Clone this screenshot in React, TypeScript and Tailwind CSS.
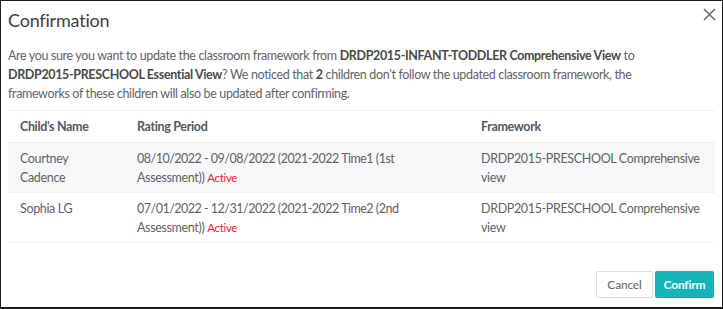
import React from "react";

const font = { fontFamily: "Lato, 'Liberation Sans', sans-serif" };

export default function App() {
  const rows = [
    {
      name: ["Courtney", "Cadence"],
      period: ["08/10/2022 - 09/08/2022 (2021-2022 Time1 (1st", "Assessment))"],
      fw: ["DRDP2015-PRESCHOOL Comprehensive", "view"],
      bg: "bg-[#f7f8fa]",
    },
    {
      name: ["Sophia LG"],
      period: ["07/01/2022 - 12/31/2022 (2021-2022 Time2 (2nd", "Assessment))"],
      fw: ["DRDP2015-PRESCHOOL Comprehensive", "view"],
      bg: "bg-white",
    },
  ];
  return (
    <div
      className="w-[723px] h-[309px] border border-b-2 border-[#1c1c1c] bg-white flex flex-col text-[#5f6368]"
      style={font}
    >
      <div className="flex justify-between items-start pl-[7px] pr-[5px] pt-[5px]">
        <div className="text-[18px] leading-[28px] tracking-[-0.2px] text-[#3f3f3f]">Confirmation</div>
        <button className="mt-[1px] w-[14px] h-[14px] mr-[1px] flex items-center justify-center text-[#777]">
          <svg width="13" height="13" viewBox="0 0 13 13" fill="none" stroke="#6b6b6b" strokeWidth="1.6">
            <path d="M1 1 L12 12 M12 1 L1 12" />
          </svg>
        </button>
      </div>
      <p className="mt-[12px] px-[7px] text-[12.5px] leading-[19px] whitespace-nowrap tracking-[-0.35px]">
        Are you sure you want to update the classroom framework from{" "}
        <b className="font-bold text-[#4a4a4a]">DRDP2015-INFANT-TODDLER Comprehensive View</b> to
        <br />
        <b className="font-bold text-[#4a4a4a]">DRDP2015-PRESCHOOL Essential View</b>? We noticed that{" "}
        <b className="font-bold text-[#4a4a4a]">2</b> children don't follow the updated classroom framework, the
        <br />
        frameworks of these children will also be updated after confirming.
      </p>
      <div className="mt-[7px] mx-[7px] text-[12.5px] leading-[19px] tracking-[-0.35px] whitespace-nowrap">
        <div className="flex border-t border-[#eef0f2] h-[32px] items-center font-bold text-[#505a62]">
          <div className="w-[117px] pl-[12px]">Child's Name</div>
          <div className="w-[344px] pl-[12px]">Rating Period</div>
          <div className="flex-1 pl-[12px]">Framework</div>
        </div>
        {rows.map((r, i) => (
          <div key={i} className={`flex border-t border-b border-[#eef0f2] -mb-px h-[51px] pt-[6px] ${r.bg}`}>
            <div className="w-[117px] pl-[12px]">
              {r.name.map((n, j) => (
                <div key={j}>{n}</div>
              ))}
            </div>
            <div className="w-[344px] pl-[12px]">
              <div className="tracking-[-0.5px]">{r.period[0]}</div>
              <div>
                {r.period[1]} <span className="text-[#f5222d] text-[11.5px]">Active</span>
              </div>
            </div>
            <div className="flex-1 pl-[12px]">
              <div>{r.fw[0]}</div>
              <div>{r.fw[1]}</div>
            </div>
          </div>
        ))}
      </div>
      <div className="flex justify-end gap-[2px] pr-[8px] mt-[29px]">
        <button className="w-[57px] h-[27px] border border-[#dcdfe3] rounded-[2px] text-[12px] tracking-[-0.2px] text-[#5f6368] bg-white">
          Cancel
        </button>
        <button className="w-[59px] h-[27px] rounded-[2px] text-[12px] tracking-[-0.2px] font-bold text-white bg-[#13b3b9]">
          Confirm
        </button>
      </div>
    </div>
  );
}
